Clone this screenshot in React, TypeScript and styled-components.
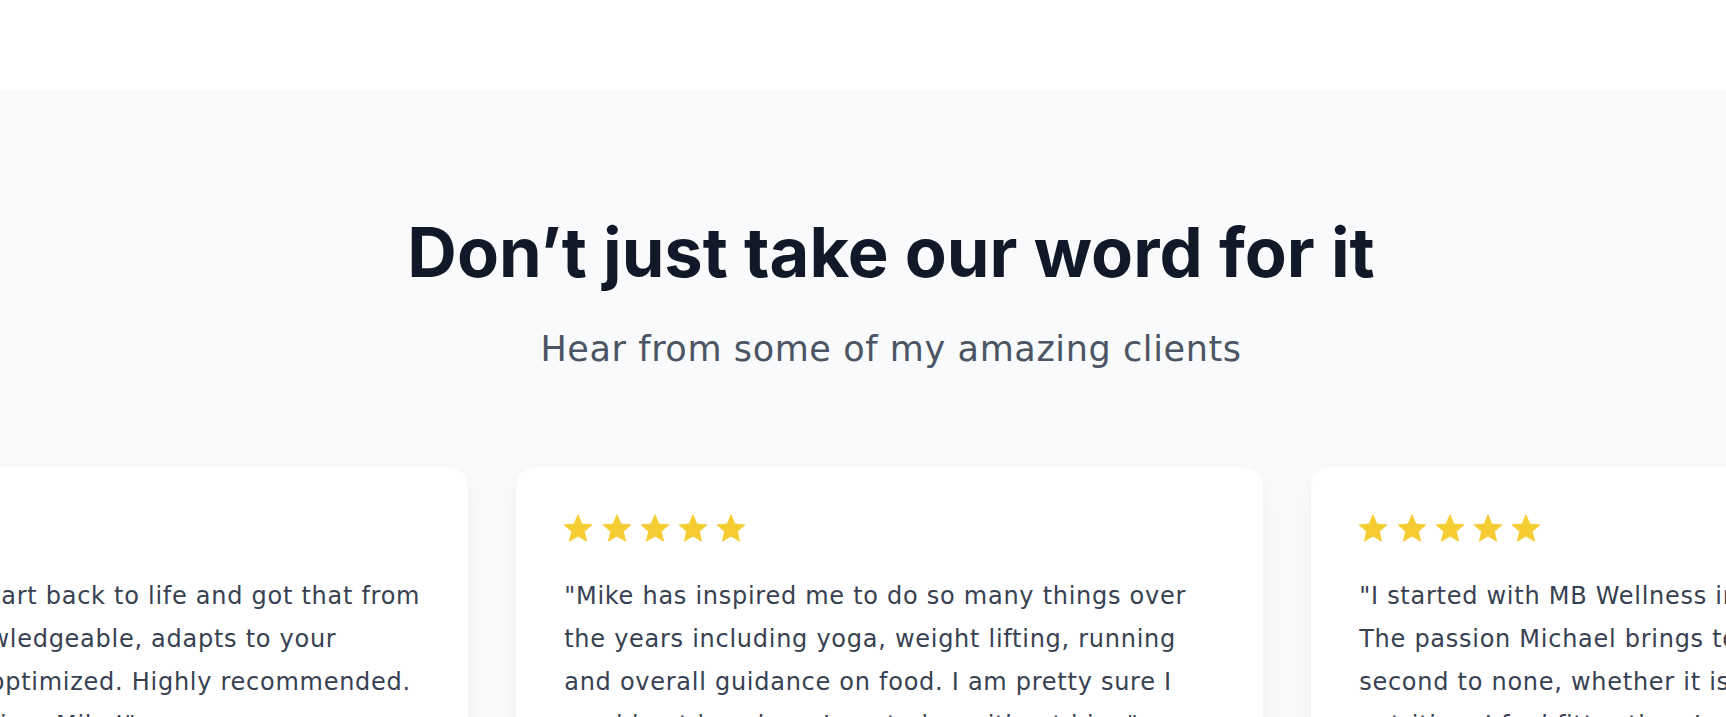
import React from "react";
import styled, { createGlobalStyle } from "styled-components";

const GlobalStyle = createGlobalStyle`
  html, body { margin: 0; padding: 0; background: #ffffff; }
  body { font-family: "DejaVu Sans", "Noto Sans", sans-serif; -webkit-font-smoothing: antialiased; }
  #root { width: 100%; }
`;

const Page = styled.div`
  width: 100%;
  overflow: hidden;
`;

const TopBand = styled.div`
  height: 90px;
  background: #ffffff;
`;

const Section = styled.section`
  background: #f9fafb;
  padding-top: 125px;
  overflow: hidden;
`;

const Header = styled.header`
  display: flex;
  flex-direction: column;
  align-items: center;
  padding-left: 56px;
`;

const Title = styled.h2`
  margin: 0;
  font-family: "Inter", "DejaVu Sans", sans-serif;
  font-weight: 700;
  font-size: 68.6px;
  line-height: 76px;
  color: #111827;
  white-space: nowrap;
`;

const Subtitle = styled.p`
  margin: 34px 0 0;
  font-family: "DejaVu Sans", sans-serif;
  font-size: 35px;
  line-height: 48px;
  letter-spacing: 0.6px;
  color: #4b5563;
  white-space: nowrap;
`;

const Track = styled.div`
  display: flex;
  gap: 48px;
  margin-top: 94px;
  transform: translateX(-288px);
  width: max-content;
`;

const Card = styled.article`
  flex: 0 0 747px;
  box-sizing: border-box;
  padding: 47px 48px 48px;
  background: #ffffff;
  border-radius: 20px;
  box-shadow: 0 10px 28px -6px rgba(17, 24, 39, 0.07), 0 4px 10px -4px rgba(17, 24, 39, 0.04);
`;

const Stars = styled.div`
  display: flex;
  gap: 10.3px;
  height: 28px;
  margin-bottom: 33px;
`;

const StarIcon = styled.svg`
  width: 28px;
  height: 28px;
  display: block;
`;

const Quote = styled.p`
  margin: 0;
  font-family: "DejaVu Sans", sans-serif;
  font-size: 24px;
  line-height: 43px;
  letter-spacing: 0.73px;
  color: #374151;
  white-space: nowrap;
`;

const Star = () => (
  <StarIcon viewBox="2 1.5 20 20" aria-hidden="true">
    <path
      d="M12 17.27L18.18 21l-1.64-7.030L22 9.24l-7.19-.61L12 2 9.19 8.63 2 9.24l5.46 4.73L5.82 21z"
      fill="#F5CD32"
      stroke="#F5CD32"
      strokeWidth="0.6"
      strokeLinejoin="round"
    />
  </StarIcon>
);

const testimonials: string[][] = [
  [
    "\"I needed a jumpstart back to life and got that from",
    "Mike. He is so knowledgeable, adapts to your",
    "needs, keeps you optimized. Highly recommended.",
    "Thanks for everything, Mike!\"",
  ],
  [
    "\"Mike has inspired me to do so many things over",
    "the years including yoga, weight lifting, running",
    "and overall guidance on food. I am pretty sure I",
    "would not be where I am today without him.\"",
  ],
  [
    "\"I started with MB Wellness in 2018 and haven't",
    "The passion Michael brings to every session is",
    "second to none, whether it is strength, mobility or",
    "nutrition. I feel fitter than I ever have.\"",
  ],
];

export default function App() {
  return (
    <Page>
      <GlobalStyle />
      <TopBand />
      <Section>
        <Header>
          <Title>Don’t just take our word for it</Title>
          <Subtitle>Hear from some of my amazing clients</Subtitle>
        </Header>
        <Track>
          {testimonials.map((lines, i) => (
            <Card key={i}>
              <Stars>
                {[0, 1, 2, 3, 4].map((s) => (
                  <Star key={s} />
                ))}
              </Stars>
              <Quote>
                {lines.map((l, j) => (
                  <React.Fragment key={j}>
                    {l}
                    {j < lines.length - 1 && <br />}
                  </React.Fragment>
                ))}
              </Quote>
            </Card>
          ))}
        </Track>
      </Section>
    </Page>
  );
}
